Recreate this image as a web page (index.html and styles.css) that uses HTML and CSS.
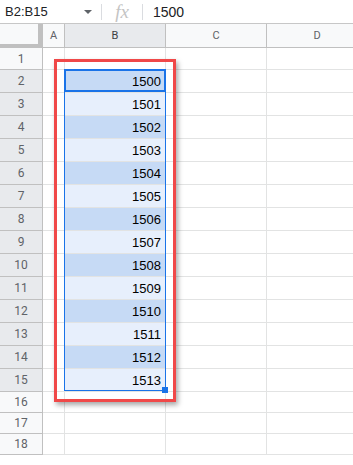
FILE: index.html
```html
<!DOCTYPE html>
<html lang="en">
<head>
    <meta charset="UTF-8">
    <meta name="viewport" content="width=device-width, initial-scale=1.0">
    <title>Sheet - B2:B15</title>
    <link rel="stylesheet" href="styles.css">
</head>
<body>
    <div class="formula-bar">
        <div class="name-box">B2:B15</div>
        <span class="caret"></span>
        <span class="divider"></span>
        <span class="fx">fx</span>
        <span class="divider"></span>
        <div class="formula-value">1500</div>
    </div>

    <div class="sheet">
        <div class="row head-row">
            <div class="corner"></div>
            <div class="col-head">A</div>
            <div class="col-head active">B</div>
            <div class="col-head">C</div>
            <div class="col-head">D</div>
        </div>
        <div class="row first"><div class="row-head">1</div><div class="cell"></div><div class="cell"></div><div class="cell"></div><div class="cell"></div></div>
        <div class="row"><div class="row-head active">2</div><div class="cell"></div><div class="cell num dark">1500</div><div class="cell"></div><div class="cell"></div></div>
        <div class="row"><div class="row-head active">3</div><div class="cell"></div><div class="cell num light">1501</div><div class="cell"></div><div class="cell"></div></div>
        <div class="row"><div class="row-head active">4</div><div class="cell"></div><div class="cell num dark">1502</div><div class="cell"></div><div class="cell"></div></div>
        <div class="row"><div class="row-head active">5</div><div class="cell"></div><div class="cell num light">1503</div><div class="cell"></div><div class="cell"></div></div>
        <div class="row"><div class="row-head active">6</div><div class="cell"></div><div class="cell num dark">1504</div><div class="cell"></div><div class="cell"></div></div>
        <div class="row"><div class="row-head active">7</div><div class="cell"></div><div class="cell num light">1505</div><div class="cell"></div><div class="cell"></div></div>
        <div class="row"><div class="row-head active">8</div><div class="cell"></div><div class="cell num dark">1506</div><div class="cell"></div><div class="cell"></div></div>
        <div class="row"><div class="row-head active">9</div><div class="cell"></div><div class="cell num light">1507</div><div class="cell"></div><div class="cell"></div></div>
        <div class="row"><div class="row-head active">10</div><div class="cell"></div><div class="cell num dark">1508</div><div class="cell"></div><div class="cell"></div></div>
        <div class="row"><div class="row-head active">11</div><div class="cell"></div><div class="cell num light">1509</div><div class="cell"></div><div class="cell"></div></div>
        <div class="row"><div class="row-head active">12</div><div class="cell"></div><div class="cell num dark">1510</div><div class="cell"></div><div class="cell"></div></div>
        <div class="row"><div class="row-head active">13</div><div class="cell"></div><div class="cell num light">1511</div><div class="cell"></div><div class="cell"></div></div>
        <div class="row"><div class="row-head active">14</div><div class="cell"></div><div class="cell num dark">1512</div><div class="cell"></div><div class="cell"></div></div>
        <div class="row"><div class="row-head active">15</div><div class="cell"></div><div class="cell num light">1513</div><div class="cell"></div><div class="cell"></div></div>
        <div class="row short"><div class="row-head">16</div><div class="cell"></div><div class="cell"></div><div class="cell"></div><div class="cell"></div></div>
        <div class="row short"><div class="row-head">17</div><div class="cell"></div><div class="cell"></div><div class="cell"></div><div class="cell"></div></div>
        <div class="row short"><div class="row-head">18</div><div class="cell"></div><div class="cell"></div><div class="cell"></div><div class="cell"></div></div>

        <!-- selection + annotation overlays -->
        <div class="selection"></div>
        <div class="active-cell"></div>
        <div class="fill-handle"></div>
        <div class="highlight-box"></div>
    </div>
</body>
</html>
```

FILE: styles.css
```css
* { box-sizing: border-box; }
body { margin: 0; background: #fff; font-family: Roboto, "Liberation Sans", Arial, sans-serif; overflow: hidden; }

.formula-bar { display: flex; align-items: center; height: 24px; border-bottom: 1px solid #c7c7c7; color: #202124; font-size: 13px; }
.name-box { width: 84px; padding-left: 5px; font-family: "Liberation Sans", Arial, sans-serif; }
.caret { width: 0; height: 0; border-left: 4px solid transparent; border-right: 4px solid transparent; border-top: 4px solid #5f6368; margin-right: 9px; }
.divider { width: 1px; height: 16px; background: #dadce0; }
.fx { width: 40px; text-align: center; font-family: "Liberation Serif", serif; font-style: italic; font-size: 19px; color: #c4c4c4; line-height: 1; }
.formula-value { padding-left: 10px; font-family: "Liberation Sans", Arial, sans-serif; font-size: 14px; }

.sheet { position: relative; width: 368px; }
.row { display: grid; grid-template-columns: 43px 22px 101px 101px 101px; height: 23px; }
.row.head-row { height: 24px; }
.row.first { height: 22px; }
.row.short { height: 21px; }

.corner { background: #f8f9fa; border-right: 5px solid #c0c0c0; border-bottom: 4px solid #c0c0c0; }
.col-head { display: flex; align-items: center; justify-content: center; background: #f8f9fa; border-right: 1px solid #c0c0c0; border-bottom: 1px solid #c0c0c0; color: #5f6368; font-size: 11px; }
.col-head.active { background: #e8eaed; color: #3c4043; }

.row-head { display: flex; align-items: center; justify-content: center; background: #f8f9fa; border-right: 1px solid #c0c0c0; border-bottom: 1px solid #c0c0c0; color: #5f6368; font-size: 12px; }
.row-head.active { background: #e8eaed; }

.cell { border-right: 1px solid #e2e3e3; border-bottom: 1px solid #e2e3e3; }
.num { display: flex; align-items: center; justify-content: flex-end; padding-right: 4px; font-family: "Liberation Sans", Arial, sans-serif; font-size: 13px; color: #000; }
.num.dark { background: #c6daf5; }
.num.light { background: #e7effc; }

.selection { position: absolute; left: 64px; top: 45px; width: 102px; height: 322px; border: 1px solid #1a73e8; }
.active-cell { position: absolute; left: 64px; top: 45px; width: 102px; height: 23px; border: 2px solid #1a73e8; }
.fill-handle { position: absolute; left: 162px; top: 363px; width: 6px; height: 6px; background: #1a73e8; }
.highlight-box { position: absolute; left: 54px; top: 35px; width: 122px; height: 343px; border: 3px solid #f04848; box-shadow: 2px 3px 5px rgba(0,0,0,0.35); }
```
